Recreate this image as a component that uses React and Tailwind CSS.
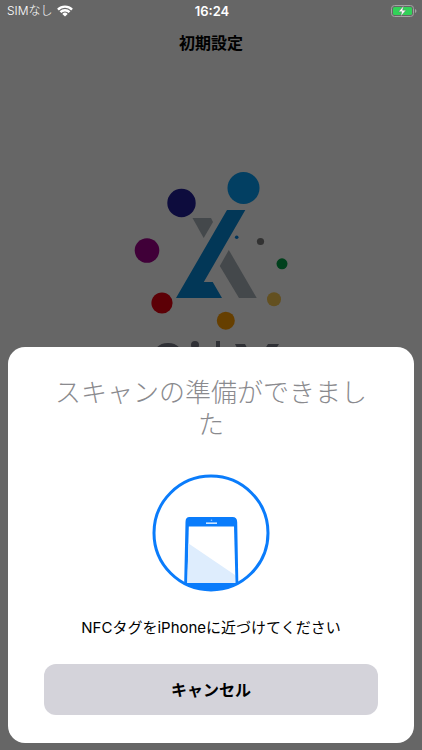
import React from "react";

function WifiIcon() {
  return (
    <svg viewBox="0 0 16 12" className="h-3 w-4" fill="#fff" aria-hidden="true">
      <path d="M8 11.6 L5.3 8.9 A3.9 3.9 0 0 1 10.7 8.9 Z" />
      <path d="M2.6 6.3 A7.6 7.6 0 0 1 13.4 6.3 L11.7 8 A5.2 5.2 0 0 0 4.3 8 Z" />
      <path d="M0.1 3.7 A11.2 11.2 0 0 1 15.9 3.7 L14.2 5.4 A8.8 8.8 0 0 0 1.8 5.4 Z" />
    </svg>
  );
}

function BatteryIcon() {
  return (
    <svg viewBox="0 0 26 12" className="h-3 w-[26px]" aria-label="充電中">
      <rect x="0.5" y="0.5" width="22" height="11" rx="3" fill="none" stroke="#a3a3a3" />
      <rect x="2" y="2" width="19" height="8" rx="1.6" fill="#32d158" />
      <path d="M24 4 Q25.5 4.6 25.5 6 Q25.5 7.4 24 8 Z" fill="#a3a3a3" />
      <path d="M12.6 0.8 L7.6 6.7 H10.8 L9.8 11.2 L14.9 5.3 H11.6 Z" fill="#fff" stroke="#666" strokeWidth="0.4" />
    </svg>
  );
}

function BrandMark() {
  return (
    <svg viewBox="0 0 160 190" className="h-[190px] w-40" aria-hidden="true">
      <circle cx="112.5" cy="18" r="16" fill="#023f62" />
      <circle cx="50.5" cy="33" r="14.2" fill="#0d0c3d" />
      <circle cx="16" cy="80.5" r="12.3" fill="#400038" />
      <circle cx="31" cy="133" r="10.6" fill="#5c0006" />
      <circle cx="94.8" cy="150.7" r="9" fill="#663f00" />
      <circle cx="143" cy="129.3" r="7" fill="#635020" />
      <circle cx="151" cy="93.8" r="5.5" fill="#00401c" />
      <circle cx="129.5" cy="71.5" r="3.6" fill="#323232" />
      <circle cx="105.7" cy="67.3" r="1.8" fill="#003459" />
      <path d="M61.5 48 H80 L82 52 L72.7 68 Z" fill="#44484b" />
      <path d="M96 40 H114.3 L72.8 112 H81.7 L91 128 H45 Z" fill="#023757" />
      <path d="M97.8 80 L125.7 128 H108 L88.8 96 Z" fill="#44484b" />
      <g fill="#2f3035">
        <path d="M21 192 Q22 173 37 173 Q52 173 53 192 Z" />
        <circle cx="64" cy="175" r="4" />
        <rect x="85" y="171" width="4" height="19" />
        <path d="M104 174 H114 L122 190 H112 Z" />
        <path d="M137 174 H148 L138 190 H127 Z" />
      </g>
    </svg>
  );
}

function ScanIcon() {
  return (
    <svg viewBox="0 0 118 118" className="h-[118px] w-[118px]" aria-hidden="true">
      <defs>
        <clipPath id="scan-circle">
          <circle cx="59" cy="59" r="57" />
        </clipPath>
      </defs>
      <g clipPath="url(#scan-circle)">
        <path d="M37.5 43 H80.5 Q85 43 85.2 48 L86.5 118 H32 L33.5 48 Q33.5 43 37.5 43 Z" fill="#0a7cfb" />
        <path d="M36.8 52.5 H82 L83.5 109 H35.3 Z" fill="#fff" />
        <path d="M36.6 69.5 L83 101 V109 H35.3 Z" fill="#deedfd" />
        <rect x="54" y="48.5" width="11" height="1.3" fill="#fff" />
        <circle cx="59.5" cy="46.3" r="0.8" fill="#8fc3ff" />
      </g>
      <circle cx="59" cy="59" r="57" fill="none" stroke="#0a7cfb" strokeWidth="3" />
    </svg>
  );
}

export default function App() {
  return (
    <div className="grid h-screen grid-cols-1 grid-rows-1 overflow-hidden bg-[#666666] font-['Inter','Noto_Sans_CJK_JP',sans-serif] text-black" lang="ja">
      <main className="col-start-1 row-start-1 flex flex-col">
        <div className="grid h-[22px] grid-cols-3 items-center pl-[7px] pr-[5px] text-xs text-white">
          <div className="flex items-center gap-1 font-light">
            <span className="leading-5">SIMなし</span>
            <WifiIcon />
          </div>
          <time className="text-center text-[13px] font-semibold leading-5">16:24</time>
          <div className="flex justify-end">
            <BatteryIcon />
          </div>
        </div>
        <h1 className="h-[42px] text-center text-base font-bold leading-[42px]">初期設定</h1>
        <div className="flex justify-center pt-[106px]">
          <BrandMark />
        </div>
      </main>
      <section role="dialog" aria-labelledby="scan-title" className="z-10 col-start-1 row-start-1 mx-2 mb-[7px] flex flex-col items-center self-end rounded-[17px] bg-white px-9 pb-7 pt-[30px] text-center">
        <h2 id="scan-title" className="px-2 text-[26px] font-light leading-8 text-[#8a8a8e]">スキャンの準備ができました</h2>
        <div className="pt-[33px]">
          <ScanIcon />
        </div>
        <p className="pt-6 text-[15px] leading-6">NFCタグをiPhoneに近づけてください</p>
        <button type="button" className="mt-6 h-[51px] w-full rounded-xl bg-[#d4d3da] text-base font-bold">キャンセル</button>
      </section>
    </div>
  );
}
